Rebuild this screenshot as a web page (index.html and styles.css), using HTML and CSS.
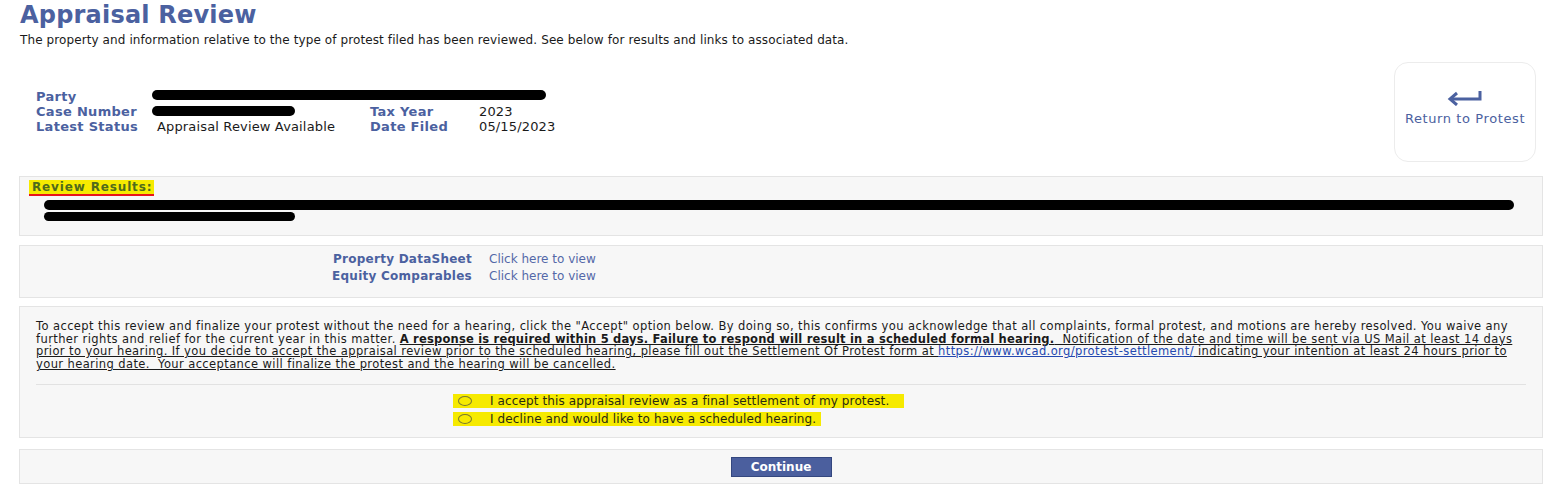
FILE: index.html
```html
<!DOCTYPE html>
<html>

<head>
    <title>Appraisal Review</title>
    <link rel="stylesheet" href="styles.css">
</head>

<body>
    <h1 class="title">Appraisal Review</h1>
    <p class="intro">The property and information relative to the type of protest filed has been reviewed. See below for results and links to associated data.</p>

    <div class="header">
        <div class="info">
            <span class="lbl">Party</span>
            <span class="val wide"><span class="redact party-bar"></span></span>

            <span class="lbl">Case Number</span>
            <span class="val"><span class="redact case-bar"></span></span>
            <span class="lbl">Tax Year</span>
            <span class="val">2023</span>

            <span class="lbl">Latest Status</span>
            <span class="val">Appraisal Review Available</span>
            <span class="lbl">Date Filed</span>
            <span class="val">05/15/2023</span>
        </div>

        <a class="return-box" href="#">
            <svg width="36" height="16" viewBox="0 0 36 16">
                <path d="M33 1 V9 H4" fill="none" stroke="#4b61a0" stroke-width="3"/>
                <path d="M10 3 L3 9 L10 15" fill="none" stroke="#4b61a0" stroke-width="3"/>
            </svg>
            <span>Return to Protest</span>
        </a>
    </div>

    <div class="panel results">
        <span class="results-title">Review Results:</span>
        <div class="redacted-text">
            <span class="redact line-1"></span>
            <span class="redact line-2"></span>
        </div>
    </div>

    <div class="panel links">
        <span class="link-lbl">Property DataSheet</span>
        <a href="#">Click here to view</a>
        <span class="link-lbl">Equity Comparables</span>
        <a href="#">Click here to view</a>
    </div>

    <div class="panel agree">
        <p class="terms">To accept this review and finalize your protest without the need for a hearing, click the "Accept" option below. By doing so, this confirms you acknowledge that all complaints, formal protest, and motions are hereby resolved. You waive any<br>further rights and relief for the current year in this matter. <u><b>A response is required within 5 days. Failure to respond will result in a scheduled formal hearing.</b>&nbsp; Notification of the date and time will be sent via US Mail at least 14 days<br>prior to your hearing. If you decide to accept the appraisal review prior to the scheduled hearing, please fill out the Settlement Of Protest form at <a href="#">https://www.wcad.org/protest-settlement/</a> indicating your intention at least 24 hours prior to<br>your hearing date.&nbsp; Your acceptance will finalize the protest and the hearing will be cancelled.</u></p>
        <hr>
        <div class="choices">
            <label class="choice first"><span class="radio"></span>I accept this appraisal review as a final settlement of my protest.</label>
            <label class="choice"><span class="radio"></span>I decline and would like to have a scheduled hearing.</label>
        </div>
    </div>

    <div class="panel actions">
        <button type="button">Continue</button>
    </div>
</body>

</html>
```

FILE: styles.css
```css
body {
    font-family: "DejaVu Sans", Verdana, sans-serif;
    color: #1a1a1a;
    background-color: #fff;
    margin: 0;
    padding: 0;
}

.title {
    margin: 1px 0 0 20px;
    font-size: 24px;
    line-height: 28px;
    letter-spacing: 0.2px;
    color: #4b61a0;
}

.intro {
    margin: 4px 0 0 20px;
    font-size: 12px;
    line-height: 14px;
    letter-spacing: 0.1px;
}

.header {
    display: flex;
    justify-content: space-between;
    align-items: center;
    margin: 15px 12px 0 36px;
    height: 100px;
}

.info {
    display: grid;
    grid-template-columns: 121px 213px 109px auto;
    font-size: 13px;
    line-height: 15px;
    margin-top: -2px;
}

.lbl {
    font-weight: bold;
    color: #4b61a0;
    letter-spacing: 0.3px;
}

.val {
    letter-spacing: 0.15px;
}

.val.wide {
    grid-column: 2 / 5;
}

.redact {
    display: block;
    background-color: #000;
    border-radius: 6px;
}

.party-bar {
    width: 394px;
    height: 10px;
    margin: 1px 0 0 -5px;
}

.case-bar {
    width: 143px;
    height: 10px;
    margin: 2px 0 0 -5px;
}

.return-box {
    width: 142px;
    height: 100px;
    border: 1px solid #ececec;
    border-radius: 14px;
    display: flex;
    flex-direction: column;
    align-items: center;
    justify-content: center;
    gap: 5px;
    text-decoration: none;
    color: #4b61a0;
    font-size: 13px;
    letter-spacing: 0.6px;
    padding-bottom: 8px;
    box-sizing: border-box;
}

.panel {
    margin: 0 5px 0 19px;
    background-color: #f7f7f7;
    border: 1px solid #e4e4e4;
    box-sizing: border-box;
}

.results {
    margin-top: 14px;
    height: 60px;
    padding: 3px 0 0 9px;
}

.results-title {
    display: block;
    width: fit-content;
    font-size: 12px;
    font-weight: bold;
    line-height: 14px;
    letter-spacing: 0.85px;
    color: #4f6a1c;
    background-color: #f6ea00;
    padding: 0 2px 0 3px;
    border-bottom: 2px solid #e8141a;
}

.redacted-text {
    margin: 4px 0 0 15px;
}

.line-1 {
    width: 1470px;
    height: 10px;
}

.line-2 {
    width: 251px;
    height: 9px;
    margin-top: 2px;
}

.links {
    margin-top: 9px;
    height: 53px;
    padding-top: 5px;
    display: grid;
    grid-template-columns: 452px auto;
    column-gap: 17px;
    align-content: start;
    font-size: 12px;
    line-height: 17px;
}

.link-lbl {
    text-align: right;
    font-weight: bold;
    color: #4b61a0;
    letter-spacing: 0.25px;
}

.links a {
    color: #5468a8;
    text-decoration: none;
}

.agree {
    margin-top: 8px;
    height: 132px;
    padding: 13px 8px 0 16px;
}

.terms {
    margin: 0;
    font-size: 11.5px;
    line-height: 12.7px;
    letter-spacing: 0.4px;
    white-space: nowrap;
}

.terms b {
    letter-spacing: 0.2px;
}

.terms a {
    color: #2448b0;
}

hr {
    border: none;
    border-top: 1px solid #e2e2e2;
    margin: 13px 8px 0 0;
}

.choices {
    display: flex;
    flex-direction: column;
    align-items: flex-start;
    gap: 4px;
    margin: 9px 0 0 417px;
}

.choice {
    display: flex;
    align-items: center;
    background-color: #f6ea00;
    color: #2a2a10;
    font-size: 12px;
    line-height: 14px;
    letter-spacing: 0.12px;
    padding: 0 5px 0 4px;
}

.choice.first {
    padding-right: 15px;
}

.radio {
    width: 12px;
    height: 8px;
    border: 1px solid #7a7a30;
    border-radius: 50%;
    margin: 0 18px 0 1px;
}

.actions {
    margin-top: 11px;
    height: 35px;
    display: flex;
    justify-content: center;
    align-items: center;
}

button {
    width: 101px;
    height: 20px;
    background-color: #4b5f9e;
    color: #fff;
    border: 1px solid #34477f;
    font-family: "DejaVu Sans", Verdana, sans-serif;
    font-weight: bold;
    font-size: 12px;
    cursor: pointer;
}
```
